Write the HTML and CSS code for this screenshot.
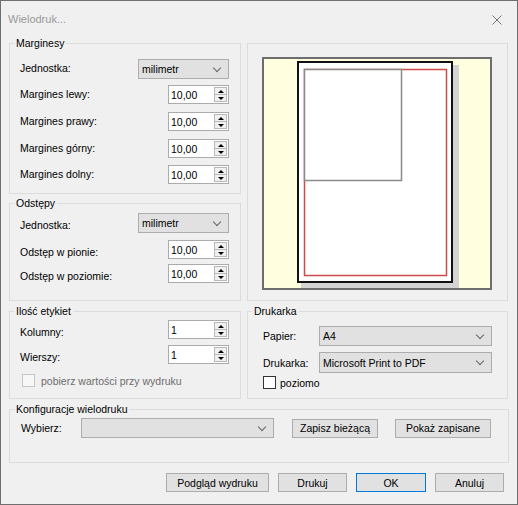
FILE: index.html
```html
<!DOCTYPE html>
<html lang="pl">
<head>
    <meta charset="UTF-8">
    <title>Wielodruk...</title>
    <link rel="stylesheet" href="styles.css">
</head>
<body>
    <div class="window">
        <div class="titlebar">
            <span class="title">Wielodruk...</span>
            <svg class="close" width="10" height="10" viewBox="0 0 10 10">
                <path d="M0.5 0.5 L9.5 9.5 M9.5 0.5 L0.5 9.5" stroke="#777" stroke-width="1" fill="none"/>
            </svg>
        </div>

        <div class="content">
            <div class="top">
                <div class="col-left">
                    <fieldset class="group g-margins">
                        <legend>Marginesy</legend>
                        <div class="rows">
                            <div class="row">
                                <span class="lbl">Jednostka:</span>
                                <div class="combo unit"><span>milimetr</span><i class="chev"></i></div>
                            </div>
                            <div class="row">
                                <span class="lbl">Margines lewy:</span>
                                <div class="spin"><span>10,00</span><span class="arrows"><i class="up"></i><i class="down"></i></span></div>
                            </div>
                            <div class="row">
                                <span class="lbl">Margines prawy:</span>
                                <div class="spin"><span>10,00</span><span class="arrows"><i class="up"></i><i class="down"></i></span></div>
                            </div>
                            <div class="row">
                                <span class="lbl">Margines górny:</span>
                                <div class="spin"><span>10,00</span><span class="arrows"><i class="up"></i><i class="down"></i></span></div>
                            </div>
                            <div class="row">
                                <span class="lbl">Margines dolny:</span>
                                <div class="spin"><span>10,00</span><span class="arrows"><i class="up"></i><i class="down"></i></span></div>
                            </div>
                        </div>
                    </fieldset>

                    <fieldset class="group g-spacing">
                        <legend>Odstępy</legend>
                        <div class="rows">
                            <div class="row low">
                                <span class="lbl">Jednostka:</span>
                                <div class="combo unit"><span>milimetr</span><i class="chev"></i></div>
                            </div>
                            <div class="row low">
                                <span class="lbl">Odstęp w pionie:</span>
                                <div class="spin"><span>10,00</span><span class="arrows"><i class="up"></i><i class="down"></i></span></div>
                            </div>
                            <div class="row low">
                                <span class="lbl">Odstęp w poziomie:</span>
                                <div class="spin"><span>10,00</span><span class="arrows"><i class="up"></i><i class="down"></i></span></div>
                            </div>
                        </div>
                    </fieldset>
                </div>

                <fieldset class="group g-preview">
                    <svg width="259" height="256" viewBox="0 0 259 256">
                        <rect x="15" y="14" width="228" height="231" fill="#ffffdf" stroke="#6e6e6e" stroke-width="2"/>
                        <rect x="53" y="21" width="158" height="223" fill="#d4d4d4"/>
                        <rect x="50" y="18" width="154" height="220" fill="#fff" stroke="#111" stroke-width="2"/>
                        <rect x="56.5" y="25.5" width="142" height="206" fill="none" stroke="#cf4a4a" stroke-width="1.5"/>
                        <rect x="56.5" y="25.5" width="97" height="111" fill="#fff" stroke="#8a8a8a" stroke-width="1.5"/>
                    </svg>
                </fieldset>
            </div>

            <div class="middle">
                <fieldset class="group g-count">
                    <legend>Ilość etykiet</legend>
                    <div class="rows">
                        <div class="row low">
                            <span class="lbl">Kolumny:</span>
                            <div class="spin"><span>1</span><span class="arrows"><i class="up"></i><i class="down"></i></span></div>
                        </div>
                        <div class="row low">
                            <span class="lbl">Wierszy:</span>
                            <div class="spin"><span>1</span><span class="arrows"><i class="up"></i><i class="down"></i></span></div>
                        </div>
                        <div class="check-row disabled">
                            <span class="check"></span>
                            <span>pobierz wartości przy wydruku</span>
                        </div>
                    </div>
                </fieldset>

                <fieldset class="group g-printer">
                    <legend>Drukarka</legend>
                    <div class="rows">
                        <div class="prow">
                            <span class="lbl">Papier:</span>
                            <div class="combo"><span>A4</span><i class="chev"></i></div>
                        </div>
                        <div class="prow">
                            <span class="lbl">Drukarka:</span>
                            <div class="combo tall"><span>Microsoft Print to PDF</span><i class="chev"></i></div>
                        </div>
                        <div class="check-row">
                            <span class="check"></span>
                            <span>poziomo</span>
                        </div>
                    </div>
                </fieldset>
            </div>

            <fieldset class="group g-config">
                <legend>Konfiguracje wielodruku</legend>
                <div class="config-row">
                    <span class="lbl">Wybierz:</span>
                    <div class="combo empty"><span></span><i class="chev"></i></div>
                    <button class="btn save">Zapisz bieżącą</button>
                    <button class="btn show">Pokaż zapisane</button>
                </div>
            </fieldset>

            <div class="buttons">
                <button class="btn preview">Podgląd wydruku</button>
                <button class="btn print">Drukuj</button>
                <button class="btn ok">OK</button>
                <button class="btn cancel">Anuluj</button>
            </div>
        </div>
    </div>
</body>
</html>
```

FILE: styles.css
```css
body {
    margin: 0;
    background-color: #fff;
    font-family: "Liberation Sans", Arial, sans-serif;
    font-size: 10.5px;
    color: #000;
}
.window {
    width: 518px;
    height: 505px;
    box-sizing: border-box;
    border: 1px solid #6f6f6f;
    background-color: #f0f0f0;
}
.titlebar {
    height: 35px;
    display: flex;
    align-items: center;
    justify-content: space-between;
    padding: 0 15px 0 7px;
}
.title {
    color: #999;
    font-size: 11px;
}
.close {
    display: block;
    margin-top: 2px;
}
.content {
    padding: 0 8px;
}

/* group boxes */
.group {
    margin: 0;
    padding: 0;
    border: 1px solid #dcdcdc;
    box-sizing: border-box;
    min-width: 0;
}
.group legend {
    margin-left: 4px;
    padding: 0 2px;
    line-height: 15px;
    font-size: 10.5px;
}
.top {
    display: flex;
    gap: 6px;
    height: 265px;
}
.col-left {
    width: 232px;
    display: flex;
    flex-direction: column;
    gap: 2px;
}
.rows {
    display: flex;
    flex-direction: column;
    padding: 0 11px 0 10px;
}
.g-margins {
    height: 158px;
}
.g-margins .rows {
    padding-top: 8px;
}
.g-spacing {
    height: 105px;
}
.g-spacing .rows {
    padding-top: 2px;
}
.g-preview {
    width: 261px;
    height: 258px;
    margin-top: 7px;
}
.g-preview svg {
    display: block;
}
.g-margins .row {
    height: 27px;
}
.g-margins .row:first-child,
.g-margins .row:nth-child(4) {
    height: 26px;
}
.row {
    display: flex;
    justify-content: space-between;
    align-items: flex-start;
}
.row .lbl {
    line-height: 15px;
    margin-top: 2px;
}
.row.low .lbl {
    margin-top: 5px;
}
.g-spacing .row:first-child {
    height: 27px;
}
.g-spacing .row {
    height: 24px;
}

.middle {
    display: flex;
    gap: 6px;
    margin-top: 3px;
    height: 95px;
}
.g-count {
    width: 232px;
}
.g-count .rows {
    padding-top: 1px;
}
.g-count .row {
    height: 25px;
}
.g-count .row + .row {
    height: 29px;
}
.g-printer {
    width: 261px;
}
.g-printer .rows {
    padding: 4px 15px 0 15px;
}
.prow {
    display: grid;
    grid-template-columns: 56px 1fr;
    align-items: center;
    height: 26px;
}
.prow .combo {
    height: 20px;
}
.prow .combo.tall {
    height: 21px;
}
.prow + .prow {
    height: 27px;
}
.check-row {
    display: flex;
    align-items: center;
    gap: 6px;
    padding-left: 2px;
    height: 13px;
}
.g-printer .check-row {
    padding-left: 0;
    gap: 4px;
}
.check {
    width: 11px;
    height: 11px;
    border: 1px solid #333;
    background-color: #fff;
}
.check-row.disabled {
    color: #6d6d6d;
}
.check-row.disabled .check {
    border-color: #c6c6c6;
    background-color: #f7f7f7;
}

.g-config {
    margin-top: 3px;
    height: 61px;
}
.config-row {
    display: flex;
    align-items: center;
    height: 20px;
    padding: 1px 0 0 11px;
}
.config-row .lbl {
    width: 60px;
}
.config-row .combo {
    width: 193px;
    height: 20px;
}
.config-row .btn.save {
    width: 86px;
    margin-left: 18px;
}
.config-row .btn.show {
    width: 96px;
    margin-left: 17px;
}

/* controls */
.combo {
    display: flex;
    align-items: center;
    justify-content: space-between;
    box-sizing: border-box;
    border: 1px solid #adadad;
    background-color: #e1e1e1;
    padding: 0 8px 0 3px;
    font-size: 10.5px;
}
.combo.unit {
    width: 91px;
    height: 20px;
}
.chev {
    width: 5px;
    height: 5px;
    border-right: 1px solid #666;
    border-bottom: 1px solid #666;
    transform: rotate(45deg);
    margin-top: -3px;
}
.spin {
    width: 61px;
    height: 19px;
    box-sizing: border-box;
    border: 1px solid #ababab;
    background-color: #fff;
    display: flex;
    align-items: center;
    justify-content: space-between;
    padding: 0 1px 0 2px;
}
.arrows {
    width: 13px;
    height: 15px;
    box-sizing: border-box;
    border: 1px solid #b9b9b9;
    background-color: #f0f0f0;
    display: flex;
    flex-direction: column;
}
.arrows i {
    flex: 1;
    display: flex;
    align-items: center;
    justify-content: center;
}
.arrows .up {
    border-bottom: 1px solid #b9b9b9;
}
.arrows .up::after {
    content: "";
    border-left: 3px solid transparent;
    border-right: 3px solid transparent;
    border-bottom: 3px solid #000;
}
.arrows .down::after {
    content: "";
    border-left: 3px solid transparent;
    border-right: 3px solid transparent;
    border-top: 3px solid #000;
}
.btn {
    height: 19px;
    box-sizing: border-box;
    border: 1px solid #adadad;
    background-color: #e1e1e1;
    font-family: "Liberation Sans", Arial, sans-serif;
    font-size: 10.5px;
    color: #000;
    padding: 0;
}
.buttons {
    display: flex;
    justify-content: flex-end;
    gap: 9px;
    margin-top: 10px;
    padding-right: 5px;
}
.btn.preview {
    width: 103px;
}
.btn.print,
.btn.cancel {
    width: 69px;
}
.btn.ok {
    width: 70px;
    border-color: #0078d7;
}
```
